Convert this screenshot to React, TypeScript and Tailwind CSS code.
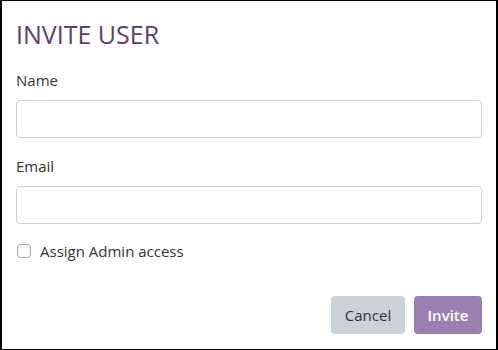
import { useState } from "react";

// Dialog "Invite user" — nama, email, toggle admin, dua tombol aksi.

function Field({ label, type, className }: { label: string; type: string; className?: string }) {
  return (
    <div className={className}>
      <label className="block text-[15px] leading-[20px] text-[#333]">{label}</label>
      <input
        type={type}
        className="mt-[10px] block h-[38px] w-full rounded-[4px] border border-[#cfcfcf] bg-white px-3 text-[15px] outline-none"
      />
    </div>
  );
}

export default function App() {
  const [admin, setAdmin] = useState(false);

  return (
    <div
      className="h-[350px] w-[498px] border-y border-l-2 border-r-2 border-black bg-white"
      style={{ fontFamily: '"Open Sans", "Noto Sans", sans-serif' }}
    >
      <div className="px-[14px] pt-[18px]">
        <h1 className="text-[25px] leading-[30px] font-normal text-[#5a4271]">INVITE USER</h1>

        <Field label="Name" type="text" className="mt-[21px]" />
        <Field label="Email" type="email" className="mt-[18px]" />

        <label className="mt-[17px] flex h-[20px] items-center gap-[9px] text-[15px] text-[#333]">
          <input
            type="checkbox"
            checked={admin}
            onChange={(e) => setAdmin(e.target.checked)}
            className="ml-[1px] h-[14px] w-[14px] appearance-none rounded-[3px] border border-[#aaa] bg-white"
          />
          Assign Admin access
        </label>

        <div className="mt-[35px] flex justify-end gap-[9px]">
          <button className="h-[38px] w-[74px] rounded-[4px] bg-[#c9d3d7] text-[15px] text-[#333]">
            Cancel
          </button>
          <button className="h-[38px] w-[68px] rounded-[4px] bg-[#9a80b1] text-[15px] font-semibold text-white">
            Invite
          </button>
        </div>
      </div>
    </div>
  );
}
